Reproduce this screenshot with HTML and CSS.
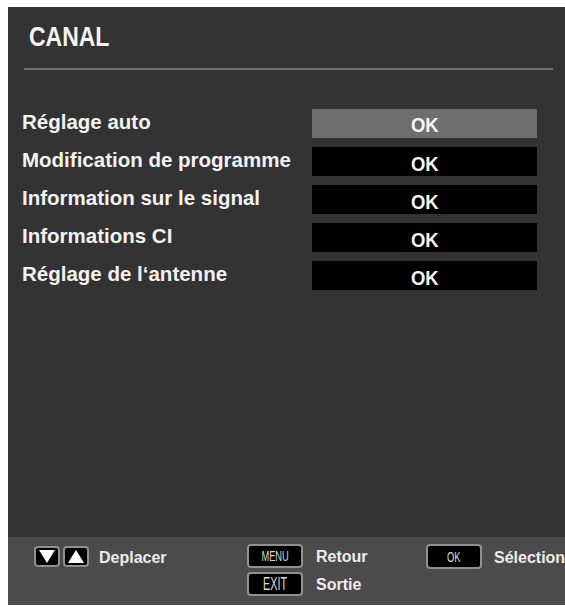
FILE: index.html
```html
<!DOCTYPE html>
<html>
  <head>
    <meta charset="UTF-8"/>
    <title>CANAL</title>
    <link rel="stylesheet" href="styles.css">
  </head>
  <body>
    <div class="panel">
      <div class="title"><h1>CANAL</h1></div>
      <div class="divider"></div>

      <div class="menu">
        <p class="label">Réglage auto</p><div class="btn selected"><span>OK</span></div>
        <p class="label">Modification de programme</p><div class="btn"><span>OK</span></div>
        <p class="label">Information sur le signal</p><div class="btn"><span>OK</span></div>
        <p class="label">Informations CI</p><div class="btn"><span>OK</span></div>
        <p class="label">Réglage de l‘antenne</p><div class="btn"><span>OK</span></div>
      </div>

      <div class="footer">
        <div class="hint move">
          <div class="arrows">
            <span class="key arrow">
              <svg width="18" height="15" viewBox="0 0 18 15"><polygon points="1,1 17,1 9,14" fill="#fff"/></svg>
            </span>
            <span class="key arrow">
              <svg width="18" height="15" viewBox="0 0 18 15"><polygon points="9,1 17,14 1,14" fill="#fff"/></svg>
            </span>
          </div>
          <span class="hinttxt">Deplacer</span>
        </div>
        <div class="hint back">
          <span class="key wide"><span class="keytxt">MENU</span></span>
          <span class="hinttxt">Retour</span>
          <span class="key wide"><span class="keytxt exit-k">EXIT</span></span>
          <span class="hinttxt">Sortie</span>
        </div>
        <div class="hint select">
          <span class="key wide ok-key"><span class="keytxt">OK</span></span>
          <span class="hinttxt">Sélection</span>
        </div>
      </div>
    </div>
  </body>
</html>
```

FILE: styles.css
```css
body {
  margin: 0;
  background-color: #fdfdfd;
  font-family: "Liberation Sans", Arial, sans-serif;
}

.panel {
  margin: 7px 0 0 8px;
  width: 557px;
  height: 598px;
  background-color: #333333;
  display: flex;
  flex-direction: column;
}

.title {
  height: 58px;
}

.title h1 {
  display: inline-block;
  margin: 0;
  padding: 13px 0 0 21px;
  font-size: 28px;
  font-weight: bold;
  line-height: 34px;
  color: #f4f4f4;
  transform: scaleX(0.82);
  transform-origin: 21px 0;
}

.divider {
  margin: 3px 12px 0 16px;
  height: 2px;
  background-color: #707070;
}

/* liste des réglages */
.menu {
  margin: 39px 0 0 14px;
  display: grid;
  grid-template-columns: 290px 225px;
  grid-auto-rows: 29px;
  row-gap: 9px;
  align-items: center;
}

.label {
  margin: 0;
  font-size: 20.5px;
  font-weight: bold;
  color: #f2f2f2;
  white-space: nowrap;
  padding-bottom: 3px;
}

.btn {
  height: 29px;
  background-color: #000;
  color: #f6f6f6;
  font-size: 21px;
  font-weight: bold;
  text-align: center;
  line-height: 34px;
}

.btn span {
  display: inline-block;
  transform: scaleX(0.88);
}

.btn.selected {
  background-color: #6e6e6e;
  line-height: 32px;
}

/* barre du bas */
.footer {
  margin-top: auto;
  height: 68px;
  background-color: #4b4b4b;
  box-sizing: border-box;
  padding: 7px 0 0 26px;
  display: grid;
  grid-template-columns: 213px 179px 1fr;
  align-items: start;
}

.hint {
  display: flex;
  align-items: center;
}

.move {
  padding-top: 2px;
  gap: 10px;
}

.arrows {
  display: flex;
  gap: 3px;
}

.key {
  box-sizing: border-box;
  display: flex;
  align-items: center;
  justify-content: center;
  background-color: #000;
  border: 2px solid #909090;
  border-radius: 4px;
}

.arrow {
  width: 26px;
  height: 21px;
}

.back {
  display: grid;
  grid-template-columns: 56px auto;
  column-gap: 13px;
  row-gap: 4px;
  align-items: center;
}

.wide {
  width: 56px;
  height: 24px;
}

.ok-key {
  height: 25px;
}

.select {
  gap: 12px;
}

.keytxt {
  display: inline-block;
  color: #d8d8d8;
  font-size: 15px;
  line-height: 16px;
  transform: scaleX(0.62);
}

.exit-k {
  font-size: 18px;
  transform: scaleX(0.6);
}

.hinttxt {
  font-size: 16px;
  font-weight: bold;
  color: #ececec;
  padding-top: 2px;
  white-space: nowrap;
}
```
